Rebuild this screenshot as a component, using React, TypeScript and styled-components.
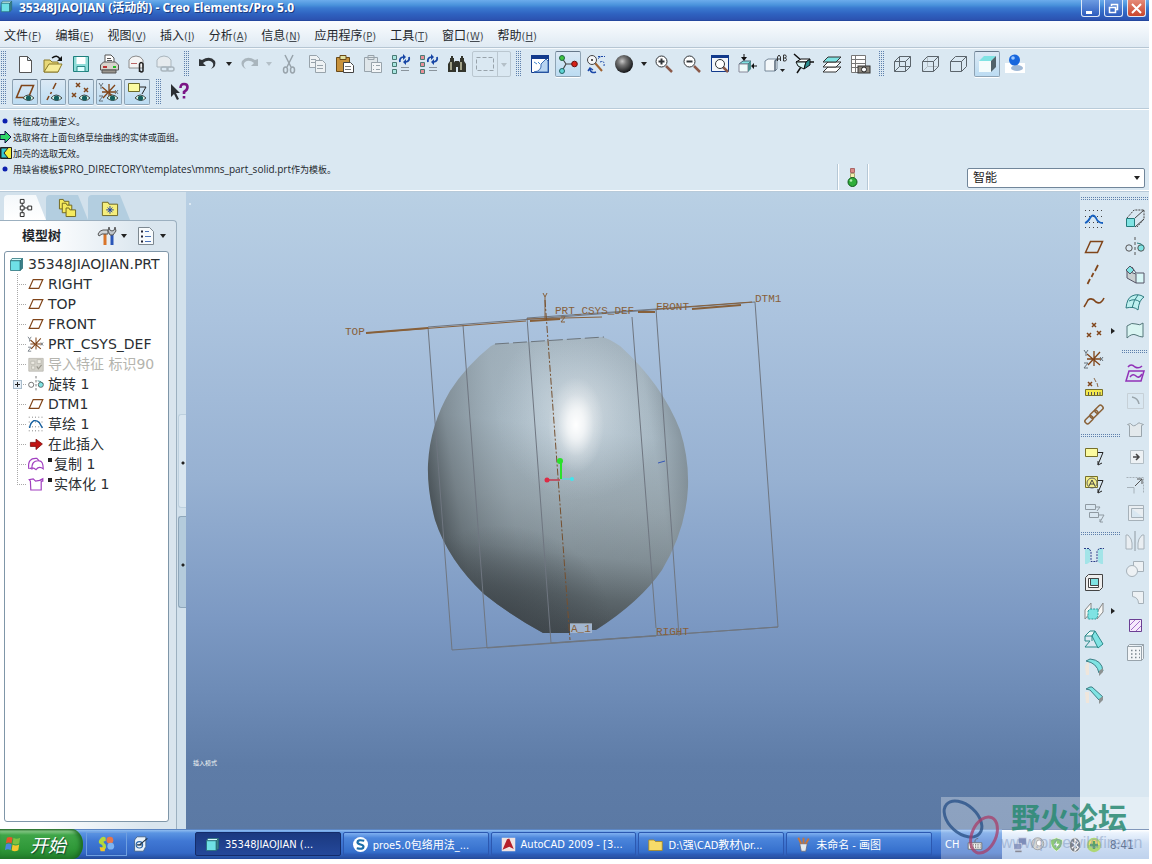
import React from "react";
import styled, { createGlobalStyle, css } from "styled-components";

const ui = `"DejaVu Sans Condensed", "DejaVu Sans", "Noto Sans CJK SC", sans-serif`;
const wide = `"DejaVu Sans", "Noto Sans CJK SC", sans-serif`;

const GlobalStyle = createGlobalStyle`
  * { box-sizing: border-box; }
  body { margin: 0; padding: 0 3px 5px 0; background: #fff; font-family: ${ui}; color: #23272c; }
  button { font: inherit; color: inherit; padding: 0; border: 0; background: none; }
  ul { list-style: none; margin: 0; padding: 0; }
`;

/* ---------- icons ---------- */

const BR = "#80451a";
const DATUM = "#87603a";
const TL = "#7fe3e3";
const GR = "#a9b5bd";
const DK = "#303438";

const cube = (back: string | null, shaded = false) => (
  <g fill="none" stroke="#5c656c">
    {shaded && (
      <g stroke="none">
        <path d="M2 7 7 2h12l-5 5z" fill={TL} />
        <path d="M2 7h12v11H2z" fill="#f4fcfc" />
        <path d="M14 7l5-5v11l-5 5z" fill="#52636a" />
      </g>
    )}
    {back && <path d="M6.500 2.500v10h11M6.500 12.500l-5 5" stroke={back} />}
    {!shaded && <path d="M1.500 7.500h11v10h-11zM1.500 7.500l5-5h11v10l-5 5M12.500 7.500l5-5" />}
  </g>
);

const cross = (x: number, y: number) => <path key={`${x}-${y}`} d={`M${x - 2} ${y - 2}l4 4m0-4l-4 4`} stroke={BR} strokeWidth="1.5" />;

const eye = (
  <g>
    <path d="M8 16q5-6 11 0-5 5-11 0z" fill="#dfe" stroke="#444" />
    <circle cx="13.500" cy="16" r="2.600" fill="#16605f" />
  </g>
);

const csys = (
  <g fill="none">
    <path d="M10 2v15M3 5l13 11M16 3 4 16M3 10h14" stroke={BR} strokeWidth="1.300" />
    <path d="M0 1l2 3 2-3M2 4v3M16 8l3 4m0-4l-3 4M0 14h4l-4 5h4" stroke="#667078" />
  </g>
);

const magnifier = (inner: React.ReactNode) => (
  <g fill="none">
    <path d="M12 12l6 6" stroke="#8b5a4a" strokeWidth="2.500" />
    <circle cx="7.500" cy="7.500" r="5.500" fill="#fff" stroke={DK} />
    {inner}
  </g>
);

const regen = (c: string) => (
  <g fill="none">
    <path d="M1.500 1.500h4v4h-4zM1.500 8.500h4v4h-4zM1.500 15.500h4v4h-4z" fill={c} stroke="#4b7a75" />
    <path d="M9 8q-1-4 3-5M18 3q1 4-3 5" stroke="#1746a5" strokeWidth="1.800" />
    <path d="M12 0v6l3-3zM15 5v6l-3-3z" fill="#1746a5" />
    <path d="M10 13.500h8M10 16.500h8" stroke="#8a949c" />
  </g>
);

const glyphs: Record<string, React.ReactNode> = {
  newFile: <path d="M4.500 2.500h8l4 4v12h-12zM12.500 2.500v4h4" fill="#fff" stroke="#555" />,
  open: (
    <g>
      <path d="M1 6h6l2 2h6v10H1z" fill="#e8d878" stroke="#8a7a2a" />
      <path d="M1 18l5-8h13l-4 8z" fill="#f6ec98" stroke="#8a7a2a" />
      <path d="M9 4q5-4 8 1" fill="none" stroke="#111" strokeWidth="1.500" />
      <path d="M19 2v5h-5z" fill="#111" />
    </g>
  ),
  save: (
    <g>
      <path d="M2.500 2.500h15v15h-15z" fill="#8fdcd8" stroke="#1f7f7c" />
      <path d="M5.500 3h9v7h-9z" fill="#fff" />
      <path d="M6 12.500h8v5H6z" fill="#dff" stroke="#2a8a88" />
    </g>
  ),
  print: (
    <g stroke="#555">
      <path d="M6 9V1h6l3 3v5" fill="#fff" />
      <path d="M8 4.500h4M8 6.500h5" />
      <path d="M1.500 11l3-3h12l3 3v5h-18z" fill="#d8d4cc" />
      <path d="M3 16h14v3H3z" fill="#9a968e" />
      <path d="M4 13h4" stroke="#b33" strokeWidth="2" />
      <path d="M14 13h3" stroke="#2b2" strokeWidth="2" />
    </g>
  ),
  mail: (
    <g fill="#f4f4f4" stroke="#8a8a8a">
      <path d="M2 14V6q2-4 7-4t7 4v8z" />
      <path d="M4 9.500h6" stroke="#b66" />
      <path d="M12.500 18V10q1.500-3 3.500 0v7q-1.500 2-3 0" fill="none" stroke="#222" strokeWidth="1.500" />
    </g>
  ),
  mailLink: (
    <g fill="#e6ebee" stroke={GR}>
      <path d="M2 13V6q2-4 7-4t7 4v7z" />
      <rect x="6" y="13" width="7" height="4" rx="2" fill="none" strokeWidth="1.500" />
      <rect x="12" y="13" width="7" height="4" rx="2" fill="none" strokeWidth="1.500" />
    </g>
  ),
  undo: <path d="M1 5v7h7l-3-3q5-4 9-1 3 3-1 7 6-3 4-8-5-6-13-1z" fill={DK} />,
  redo: <path d="M19 5v7h-7l3-3q-5-4-9-1-3 3 1 7-6-3-4-8 5-6 13-1z" fill={GR} />,
  cut: (
    <g fill="none" stroke="#98a3ab" strokeWidth="1.500">
      <path d="M6 1l6 12M14 1 8 13" />
      <ellipse cx="6.500" cy="16" rx="2" ry="3" />
      <ellipse cx="13.500" cy="16" rx="2" ry="3" />
    </g>
  ),
  copy: (
    <g fill="#eef2f4" stroke="#98a3ab">
      <path d="M2.500 1.500h7l3 3v9h-10zM4 5.500h5M4 8.500h6" />
      <path d="M8.500 6.500h7l3 3v9h-10zM10 11.500h6M10 14.500h6" />
    </g>
  ),
  paste: (
    <g stroke="#6a4a18">
      <path d="M1.500 3.500h13v14h-13z" fill="#c8923c" />
      <path d="M5 1.500h6v4H5z" fill="#e0e0a0" />
      <path d="M8.500 8.500h7l3 3v7h-10z" fill="#fff" stroke="#444" />
      <path d="M10 12.500h6M10 15.500h6" stroke="#777" />
    </g>
  ),
  pasteSpecial: (
    <g stroke="#98a3ab" fill="#dfe6ea">
      <path d="M1.500 3.500h13v14h-13zM5 1.500h6v4H5z" />
      <path d="M8.500 8.500h10v10h-10zM10 11.500h1M13 11.500h4M10 15.500h1M13 15.500h4" fill="#f2f5f7" />
    </g>
  ),
  regenA: regen("#a8e6e0"),
  regenB: regen("#e88f96"),
  find: (
    <g fill="#33352c">
      <path d="M3 4h4v3l2 3v8H1v-8l2-3zM13 4h4v3l2 3v8h-8v-8l2-3zM8 7h4v6H8z" />
      <path d="M4 8v8M14 8v8" stroke="#c9c7a8" strokeWidth="1.500" />
      <path d="M4 2h2v2H4zM14 2h2v2h-2z" />
    </g>
  ),
  repaint: (
    <g>
      <path d="M1.500 1.500h17v17h-17z" fill="#fff" stroke="#123a8c" />
      <path d="M1 1h18v4H1z" fill="#123a8c" />
      <path d="M4 18q8-1 7-8l5-5 2 2v11z" fill="#b8d4f0" stroke="#3a6cb4" />
      <path d="M4 8l3 2M8 8l2 2" stroke="#48c" />
    </g>
  ),
  spin: (
    <g>
      <path d="M4 4l4 6h8M8 10l-4 7" fill="none" stroke="#444" strokeWidth="1.200" />
      <circle cx="4" cy="4" r="2.500" fill="#3fc53f" stroke="#264" />
      <circle cx="16.500" cy="10" r="2.800" fill="#d6221a" stroke="#611" />
      <circle cx="4" cy="17" r="2.500" fill="#5fd6d6" stroke="#266" />
    </g>
  ),
  orient: (
    <g fill="none">
      <path d="M9 9l7 8" stroke="#a0622f" strokeWidth="2" />
      <circle cx="6" cy="6" r="4.500" fill="#f4f6f8" stroke="#444" />
      <circle cx="6" cy="6" r="1" fill="#222" />
      <path d="M12 2.500h7M12 4.500l3-2M14 8q5-2 4 4" stroke="#1b48a8" strokeDasharray="2 1" />
      <path d="M10 18q-5 2-6-3M2 17l2-3 3 2" stroke="#1b48a8" strokeWidth="1.500" />
    </g>
  ),
  sphere: <circle cx="10" cy="10" r="9" fill="url(#ballShade)" />,
  zoomIn: magnifier(<path d="M4.500 7.500h6M7.500 4.500v6" stroke={DK} strokeWidth="2" />),
  zoomOut: magnifier(<path d="M4.500 7.500h6" stroke={DK} strokeWidth="2" />),
  refit: (
    <g>
      <path d="M1.500 1.500h17v16h-17z" fill="#f3f6fa" stroke="#123a8c" />
      <path d="M1 1h18v3H1z" fill="#123a8c" />
      <path d="M13 13l5 5" stroke="#8b5a4a" strokeWidth="2.500" />
      <circle cx="10" cy="10" r="4.500" fill="#fff" stroke={DK} />
    </g>
  ),
  reorient: (
    <g>
      <path d="M1 10l4-3h8l-3 3z" fill={TL} stroke="#467" />
      <path d="M1 10h9v8H1z" fill="#eefafa" stroke="#889" />
      <path d="M10 10l3-3v8l-3 3z" fill="#4c8f90" />
      <path d="M6 0v5M19 12h-4" stroke="#111" />
      <path d="M3 3h6l-3 4zM16 9v6l-3-3z" fill="#111" />
    </g>
  ),
  savedViews: (
    <g fill="none">
      <path d="M-1 7l3-2h9v10l-2 2h-10z" fill="#f4f8fa" stroke="#789" />
      <path d="M9 17V7l2-2" stroke="#567" strokeWidth="1.500" />
      <path d="M11.500 7V3l1.500-2 1.500 2v4M11.500 5h3M17.500 1v6h2q2-1.500 0-3 1.500-1.500 0-3zM17.500 4h2" stroke="#333" />
      <path d="M14 15h5l-2.500 3z" fill="#222" />
    </g>
  ),
  viewMgr: (
    <g>
      <path d="M0 0l8 7M14 8h6M7 13l-4 6" stroke="#111" strokeWidth="1.500" />
      <path d="M2 8l5-3h9l-4 3z" fill="#fff" stroke="#111" />
      <path d="M2 8h10l-2 7-6-3z" fill="#d8f6f6" stroke="#111" />
      <path d="M12 8l4-3v6l-6 4z" fill="#2b8f90" stroke="#111" />
    </g>
  ),
  layers: (
    <g stroke="#333">
      <path d="M1 18l5-5h13l-5 5z" fill="#fff" />
      <path d="M1 13l5-5h13l-5 5z" fill="#fff" />
      <path d="M1 8l5-5h13l-5 5z" fill={TL} />
    </g>
  ),
  report: (
    <g>
      <path d="M1.500 1.500h14v17h-14zM1.500 5.500h14M1.500 9.500h14M1.500 13.500h14M5.500 1.500v17" fill="#fff" stroke="#777" />
      <rect x="8" y="12" width="12" height="7" fill="#8a857c" stroke="#333" />
      <circle cx="14" cy="15.500" r="2.500" fill="#fff" stroke="#222" />
    </g>
  ),
  wireframe: cube("#5c656c"),
  hidden: cube("#b3bdc4"),
  noHidden: cube(null),
  shaded: cube(null, true),
  enhanced: (
    <g>
      <path d="M0 9h20v10H0z" fill="#fff" />
      <ellipse cx="12" cy="14" rx="6" ry="3" fill="#9fb8d6" />
      <circle cx="9.500" cy="6" r="5.500" fill="#1766dd" />
      <circle cx="8" cy="4" r="1.800" fill="#9cc8ff" />
    </g>
  ),
  planeEye: (
    <g>
      <path d="M1.500 15.500l5-12h12l-5 12z" fill="none" stroke={BR} strokeWidth="1.600" />
      {eye}
    </g>
  ),
  axisEye: (
    <g>
      <path d="M13 1l-3 6M8.500 10l-1 2M6 14l-2 4" stroke={BR} strokeWidth="1.600" />
      {eye}
    </g>
  ),
  pointEye: (
    <g>
      {cross(7, 3)}
      {cross(15, 8)}
      {cross(3, 13)}
      {eye}
    </g>
  ),
  csysEye: (
    <g>
      {csys}
      {eye}
    </g>
  ),
  noteEye: (
    <g>
      <path d="M1.500 1.500h11v8h-11z" fill="#fbfba0" stroke="#6b6b2c" />
      <path d="M13 5h6l-4 7" fill="none" stroke="#222" />
      {eye}
    </g>
  ),
  help: (
    <g>
      <path d="M1 2v13l3-3 3 6 2-1-3-6h4z" fill="#2b2f33" />
      <path d="M10.500 6q0-4 3.500-4t3.500 3-3.500 5v2M14 14v2.500" fill="none" stroke="#7a1585" strokeWidth="2.600" />
    </g>
  ),
  sketch: (
    <g fill="none">
      <path d="M1 1.500h18M1 7.500h18M1 13.500h18M1 18.500h18" stroke="#444" strokeDasharray="1 3" />
      <path d="M1 14q3-1 5-5 3-5 6 0 2 5 7 5" stroke="#1560c0" strokeWidth="1.800" />
    </g>
  ),
  sketchFeat: (
    <g fill="none">
      <path d="M1 1.500h18M1 7.500h18M1 13.500h18M1 18.500h18" stroke="#444" strokeDasharray="1 3" />
      <path d="M2 15q1-7 5-9 4-1 7 2l4 7" stroke="#1560a0" strokeWidth="1.800" />
    </g>
  ),
  plane: <path d="M1.500 15.500l5-11h12l-5 11z" fill="none" stroke={BR} strokeWidth="1.500" />,
  axis: <path d="M14 0l-3 6M9.500 8l-2 4M6 14l-2.500 5" stroke={BR} strokeWidth="1.700" />,
  curve: <path d="M0 14q2-3 4-7 4-3 8 2 5 3 8-4" fill="none" stroke={BR} strokeWidth="1.600" />,
  points: (
    <g>
      {cross(10, 4)}
      {cross(5, 14)}
      {cross(15, 12)}
    </g>
  ),
  csys,
  analysis: (
    <g>
      {cross(6, 7)}
      <path d="M10 1l2 4M13 6l1 4" stroke="#8a6a4a" />
      <path d="M1.500 12.500h17v6h-17z" fill="#f2e84e" stroke="#77702a" />
      <path d="M4.500 18v-3M7.500 18v-3M10.500 18v-3M13.500 18v-3M16 18v-3" stroke="#555" />
    </g>
  ),
  chain: (
    <g fill="none" stroke="#8a6238" strokeWidth="1.500">
      <rect x="0" y="12" width="9" height="5" rx="2" transform="rotate(-45 5 14)" />
      <rect x="6" y="7" width="9" height="5" rx="2" transform="rotate(-45 10 10)" />
      <rect x="11" y="2" width="9" height="5" rx="2" transform="rotate(-45 15 5)" />
    </g>
  ),
  note: (
    <g fill="none" stroke="#222">
      <path d="M1.500 1.500h12v8h-12z" fill="#fbfba0" stroke="#77702a" />
      <path d="M14 5.500h5l-5 12M14 14v4l4-2" />
    </g>
  ),
  noteA: (
    <g fill="none" stroke="#222">
      <path d="M1.500 1.500h12v11h-12z" fill="#f3ee8a" stroke="#77702a" />
      <circle cx="8" cy="8" r="5" stroke="#666" />
      <path d="M5 11l3-6 3 6M6 9h4" stroke="#444" />
      <path d="M14 5.500h5l-5 12M14 14v4l4-2" />
    </g>
  ),
  noteOff: (
    <g fill="none" stroke="#8f9aa2">
      <path d="M1.500 1.500h10v5h-10zM5.500 9.500h9v5h-9zM12 4h4l-3 4M15 12h5l-4 7M16 16v3h3" />
    </g>
  ),
  hole: (
    <g>
      <path d="M1 4h5v13l-3 2H1zM19 4h-5v13l3 2h2z" fill={TL} opacity=".6" />
      <path d="M0 3.500h5l2 3v10h6v-10l2-3h5" fill="none" stroke="#2a3c88" strokeDasharray="2 1" />
    </g>
  ),
  shell: (
    <g stroke="#444">
      <path d="M1.500 4.500l3-3h14v13l-3 3h-14z" fill="#eee" />
      <path d="M4.500 5.500h10v9h-10z" fill="#fff" />
      <path d="M6.500 5.500h8v7h-8z" fill={TL} />
    </g>
  ),
  rib: (
    <g stroke="#888" fill="#f6f6f4">
      <path d="M1 9l6-7v9l-6 7zM13 11l6-9v9l-6 7z" />
      <path d="M4 10l2-2h8v7l-2 3H4z" fill={TL} stroke="#2b9a9a" strokeDasharray="2 1" />
    </g>
  ),
  draft: (
    <g stroke="#2b8a8a">
      <path d="M1 7l5-5h5l-3 5z" fill="#eef8f8" />
      <path d="M11 2l8 13-5 4-6-12z" fill={TL} />
      <path d="M1 7v5h5l-5 6h13M8 7v5" fill="none" />
    </g>
  ),
  round: (
    <g>
      <path d="M1 9l4-6v15H2z" fill="#efe6dc" />
      <path d="M2 4l4-2q12 1 13 12l-4 2Q13 6 2 4z" fill={TL} stroke="#3b7f86" />
      <path d="M15 14v5l4-4v-4z" fill="#8d9292" />
    </g>
  ),
  chamfer: (
    <g>
      <path d="M1 7h4v11H2z" fill="#efe6dc" />
      <path d="M2 4l4-2h2l11 10-4 3L6 5z" fill={TL} stroke="#3b7f86" />
      <path d="M15 14v5l4-4v-4z" fill="#8d9292" />
    </g>
  ),
  extrude: (
    <g fill="none" stroke="#444">
      <path d="M2 9l7-8h10v9l-7 8" strokeDasharray="2 1" />
      <path d="M10 9l9-8M10 18l9-8" />
      <path d="M1.500 9.500h8v8h-8z" fill={TL} stroke="#247b7b" />
    </g>
  ),
  revolve: (
    <g fill="none" stroke="#555">
      <path d="M10 0v20" strokeDasharray="3 2" />
      <circle cx="4" cy="11" r="3.200" />
      <circle cx="16" cy="11" r="3.200" fill={TL} />
      <path d="M12 6q5 0 7 4" stroke="#2b7f7f" />
    </g>
  ),
  sweep: (
    <g stroke="#556">
      <path d="M2 6l5-4 4 6h8v10h-8z" fill="#d9f7f7" />
      <path d="M2 6v7l9 5V9z" fill="#c9cfd0" />
      <path d="M1 5l4-4 4 4-4 4z" fill={TL} />
    </g>
  ),
  boundary: (
    <g stroke="#2f7b80" fill="#bdf0f0">
      <path d="M1 15q1-10 6-12 6-3 12 1-5 3-6 13-4-4-12-2z" />
      <path d="M4 8q6-3 11 1M13 2q-4 4-6 13" fill="none" />
    </g>
  ),
  style: <path d="M2 5q5-4 9-2t7-1v14q-3 0-7-2t-9 3z" fill="#d9f5f2" stroke="#54767a" />,
  fill: (
    <g fill="none" stroke="#9132b8" strokeWidth="1.500">
      <path d="M3 4q3-4 7 0 4 2 7-1M4 8h15l-3 10H1z" />
      <path d="M5 14q3-4 6-1t6-2" />
    </g>
  ),
  mergeOff: (
    <g fill="none" stroke="#c6d0d7">
      <path d="M2.500 2.500h16v15h-16z" />
      <path d="M7 6q6 1 7 7" stroke="#99a4ab" strokeWidth="1.500" />
    </g>
  ),
  trimOff: <path d="M2.500 5.500l3-1q3 4 6 1t4-1l3 1-2 1v11h-12v-11z" fill="#e3e9ec" stroke="#9aa5ac" />,
  offsetOff: (
    <g fill="#edf1f4" stroke="#b3bec5">
      <path d="M5.500 3.500h13v13h-13z" />
      <path d="M8 10h6M11 7l3 3-3 3" stroke="#444" fill="none" strokeWidth="1.500" />
    </g>
  ),
  extendOff: (
    <g fill="none" stroke="#a6b1b9">
      <path d="M1.500 2.500h17v15" strokeDasharray="2 1" />
      <path d="M2 12.500h7v6" />
      <path d="M10 11l7-7M12 4h5v5" stroke="#555" />
    </g>
  ),
  thickenOff: <path d="M3.500 2.500h15v15h-15zM6.500 5.500h12M6.500 5.500v9h12" fill="#e9eef2" stroke="#a6b1b9" />,
  mirrorOff: (
    <g fill="#e9eef2" stroke="#a6b1b9">
      <path d="M10 0v20" stroke="#8f9aa2" />
      <path d="M1 4h2q4 4 4 8v6H1zM19 4h-2q-4 4-4 8v6h6z" />
    </g>
  ),
  solidOff: (
    <g fill="#edf1f4" stroke="#a6b1b9">
      <path d="M8.500 2.500h10v10h-10z" />
      <circle cx="7" cy="12" r="5.500" />
    </g>
  ),
  cutOff: <path d="M7.500 4.500h11v12h-5q0-6-6-7z" fill="#edf1f4" stroke="#a6b1b9" />,
  hatch: (
    <g stroke="#a06cc8">
      <path d="M4.500 4.500h12v12h-12z" fill="#f6eafb" stroke="#6b3f93" />
      <path d="M5 10l5-5M6 15l9-9M11 16l5-5" />
    </g>
  ),
  pattern: (
    <g>
      <path d="M2.500 3.500h14v14h-14zM16.500 3.500l2-2v14l-2 2M2.500 3.500l2-2h14" fill="#f3f6f8" stroke="#98a3ab" />
      <path d="M6 7.500h9M6 11h9M6 14.500h9" stroke="#7b868e" strokeWidth="1.500" strokeDasharray="1.500 2.500" />
    </g>
  ),
  treePart: (
    <g stroke="#236b74">
      <path d="M2 5l2-3h14l-3 3z" fill="#d8fbfb" />
      <path d="M2 5h13v13H2z" fill="#6fe0e6" />
      <path d="M15 5l3-3v13l-3 3z" fill="#3c8088" />
    </g>
  ),
  imported: (
    <g fill="#d4d2ca" stroke="#b9b7ae">
      <path d="M1 3h18v16H1z" />
      <path d="M3.500 6.500h5v4h-5zM11.500 4.500h5v5h-5zM4.500 12.500h4v4h-4z" fill="#eceae2" />
      <path d="M11 13l2 3 4-5" fill="none" stroke="#9a988e" strokeWidth="1.500" />
    </g>
  ),
  insertHere: <path d="M3 8h7V4l8 6-8 7v-4H3z" fill="#c11414" stroke="#7c0b0b" />,
  copyFeat: <path d="M1 16q-2-14 10-13l3 3q5 0 5 10-5-4-9 1-4-4-8-1M5 17q-1-12 9-11" fill="none" stroke="#a13fc0" strokeWidth="1.500" />,
  solidFeat: <path d="M3 6.500L1.500 4.500l5-1 3 3 5-1 4-2v3h-2v11H3.500z" fill="none" stroke="#a13fc0" strokeWidth="1.500" />,
  tabTree: <path d="M4.500 1.500h4v4h-4zM4.500 8.500h4v4h-4zM4.500 15.500h4v4h-4zM12.500 8.500h4v4h-4zM6.500 5.500v3M6.500 12.500v3M8.500 10.500h4" fill="#fff" stroke="#222" />,
  tabFolders: (
    <g fill="#f5ea5e" stroke="#6f6620">
      <path d="M1.500 1.500h4l1 2h5v8h-10z" />
      <path d="M4.500 5.500h4l1 2h5v8h-10z" />
      <path d="M8.500 10.500h3l1 2h6v7h-10z" />
    </g>
  ),
  tabFav: (
    <g>
      <path d="M2.500 4.500h6l1 2h9v12h-16z" fill="#f5ee7c" stroke="#6f6620" />
      <path d="M10.500 8.500v8M6.500 12.500h8M8 10l5 5M13 10l-5 5" stroke="#1c3fa8" />
    </g>
  ),
  tools: (
    <g>
      <path d="M8 8v11" stroke="#d9752a" strokeWidth="3" />
      <path d="M1 8q2-4 5-4h5v4H5l-3 2z" fill="#cfd4d8" stroke="#555" />
      <path d="M15 7v12" stroke="#2a56b8" strokeWidth="3" />
      <path d="M12 1q0 4 3 4t3-4l1 4-3 4h-3l-2-4z" fill="#bfc5ca" stroke="#555" />
    </g>
  ),
  listView: (
    <g>
      <path d="M2.500 1.500h11l4 4v13h-15z" fill="#f7fafc" stroke="#7d8890" />
      <path d="M5 5.500h2M5 10.500h2M5 15.500h2" stroke="#223" strokeWidth="2" />
      <path d="M9 5.500h4M9 10.500h6M9 15.500h6" stroke="#4a72b8" />
    </g>
  ),
};

const Svg = styled.svg<{ $s?: number }>`
  display: block;
  flex: none;
  width: ${(p) => p.$s ?? 20}px;
  height: ${(p) => p.$s ?? 20}px;
  overflow: visible;
`;

const Icon = ({ name, size }: { name: string; size?: number }) => (
  <Svg $s={size} viewBox="0 0 20 20" aria-hidden="true">
    {glyphs[name]}
  </Svg>
);

/* ---------- window chrome ---------- */

const Frame = styled.div`
  position: relative;
  display: flex;
  flex-direction: column;
  min-height: calc(100vh - 5px);
  background: #dae8f2;
`;

const TitleBar = styled.header`
  display: flex;
  align-items: flex-start;
  height: 21px;
  padding-right: 3px;
  background: linear-gradient(#6cacec 0, #4a93dc 5px, #3a7ad0 8px, #2f62c0 14px, #2c52b0 20px, #1c3c8c 21px);
`;

const Title = styled.h1`
  flex: 1;
  margin: 0;
  padding-left: 6px;
  font-family: "Open Sans", "Noto Sans CJK SC", sans-serif;
  font-size: 12px;
  line-height: 16px;
  font-weight: bold;
  color: #fff;
  text-shadow: 1px 1px 0 #1d3c80;
  white-space: nowrap;
`;

const WinButton = styled.button<{ $close?: boolean }>`
  display: grid;
  place-items: center;
  width: 19px;
  height: 17px;
  margin-left: 4px;
  border: 1px solid #dfe9f8;
  border-top: 0;
  border-radius: 0 0 3px 3px;
  background: ${(p) => (p.$close ? "linear-gradient(#e58a78, #c8452c)" : "linear-gradient(#6d9ce2, #2c5bbd)")};
`;

const MenuBar = styled.nav`
  display: flex;
  align-items: center;
  gap: 14px;
  height: 27px;
  padding: 4px 0 0 4px;
  border-bottom: 1px solid #b6c6d3;
  background: linear-gradient(#fafcfe, #dfeaf3);
`;

const MenuItem = styled.button`
  font-size: 12px;
  line-height: 20px;
  white-space: nowrap;
  span { font-size: 11px; color: #444b52; }
`;

const Toolbars = styled.div`
  display: flex;
  flex-direction: column;
  padding: 1px 0 2px;
  border-top: 1px solid #f5f9fc;
  border-bottom: 1px solid #fff;
  box-shadow: inset 0 -1px #b9cbd9;
  height: 62px;
`;

const ToolRow = styled.div`
  display: flex;
  align-items: center;
  height: 28px;
`;

const dots = css`
  background-image: conic-gradient(from 0deg at 1px 1px, transparent 75%, #5e80ac 0);
  background-size: 2px 2px;
`;

const Grip = styled.span<{ $first?: boolean }>`
  flex: none;
  width: 5px;
  height: 26px;
  margin: ${(p) => (p.$first ? "0 5px 0 1px" : "0 5px")};
  ${dots}
`;

const ToolButton = styled.button<{ $active?: boolean }>`
  display: grid;
  place-items: center;
  flex: none;
  width: 26px;
  height: 26px;
  margin: 1px;
  border-radius: 2px;
  ${(p) => p.$active && css`
    border: 1px solid #8ea3b4;
    border-top-color: #66788a;
    background: linear-gradient(#dbe9f5, #bcdcf2);
    box-shadow: 0 1px #fff;
  `}
`;

const DropArrow = styled.button<{ $off?: boolean; $wide?: boolean }>`
  flex: none;
  display: grid;
  place-items: center;
  width: ${(p) => (p.$wide ? 13 : 12)}px;
  height: 26px;
  &::before {
    content: "";
    border: 3px solid transparent;
    border-top: 4px solid ${(p) => (p.$off ? "#b4c0c8" : "#222")};
    border-bottom: 0;
  }
`;

const SelectTool = styled.span`
  display: flex;
  flex: none;
  width: 39px;
  height: 26px;
  margin-left: 1px;
  border: 1px solid #bac7d0;
  border-radius: 2px;
`;

const SelectMain = styled.button`
  display: grid;
  place-items: center;
  width: 26px;
  border-right: 1px solid #bac7d0;
`;

const Messages = styled.section`
  display: flex;
  align-items: flex-end;
  height: 81px;
  border-bottom: 1px solid #fff;
`;

const Log = styled.ul`
  flex: 1;
  align-self: flex-start;
  min-width: 0;
`;

const LogLine = styled.li`
  display: flex;
  align-items: center;
  height: 16px;
  font-size: 9px;
  white-space: nowrap;
  &:first-child { margin-top: 3px; }
`;

const LogPath = styled.span`
  font-family: "Open Sans", sans-serif;
  font-size: 10px;
`;

const LogIcon = styled.svg`
  width: 13px;
  height: 14px;
  flex: none;
`;

const Signal = styled.div`
  display: grid;
  place-items: center;
  width: 31px;
  height: 26px;
  margin-right: 99px;
  border: solid #b6c8d6;
  border-width: 0 1px;
  box-shadow: 1px 0 #fff, inset 1px 0 #fff;
`;

const Filter = styled.label`
  position: relative;
  display: block;
  width: 178px;
  margin: 0 4px 2px 0;
  &::after {
    content: "";
    position: absolute;
    right: 5px;
    top: 8px;
    border: 3px solid transparent;
    border-top: 4px solid #222;
    border-bottom: 0;
    pointer-events: none;
  }
`;

const FilterSelect = styled.select`
  appearance: none;
  display: block;
  width: 100%;
  height: 20px;
  padding: 0 5px;
  border: 1px solid #71869a;
  border-radius: 2px;
  background: #fff;
  font-family: ${ui};
  font-size: 12px;
  line-height: 18px;
  color: #222;
`;

/* ---------- body ---------- */

const Main = styled.main`
  display: flex;
  flex: 1;
  border-top: 1px solid #b8cad9;
`;

const Navigator = styled.aside`
  display: flex;
  flex: none;
  width: 186px;
  background: #d2e1ec;
`;

const NavColumn = styled.div`
  display: flex;
  flex-direction: column;
  width: 177px;
  padding-top: 3px;
`;

const Tabs = styled.div`
  display: flex;
  padding-left: 4px;
`;

const Tab = styled.button<{ $on?: boolean }>`
  display: grid;
  place-items: center;
  width: 42px;
  height: 25px;
  border-radius: 4px 0 0 0;
  clip-path: polygon(0 0, 32px 0, 42px 100%, 0 100%);
  background: ${(p) => (p.$on ? "linear-gradient(#f4f8fb, #fff)" : "#b3cee0")};
`;

const Panel = styled.div`
  display: flex;
  flex-direction: column;
  flex: 1;
  padding: 0 7px 7px 4px;
  border: solid #9cb0c0;
  border-width: 1px 1px 0 0;
  border-radius: 0 4px 0 0;
  background: linear-gradient(90deg, #fff 40px, #d9e5ee 150px);
`;

const PanelHead = styled.div`
  display: flex;
  align-items: center;
  height: 30px;
  padding-left: 18px;
`;

const PanelTitle = styled.h2`
  flex: 1;
  margin: 0;
  font-size: 13px;
  line-height: 20px;
`;

const HeadTool = styled.div`
  display: flex;
  align-items: center;
  margin-left: 6px;
`;

const Tree = styled.ul`
  flex: 1;
  && { padding: 2px 0 0 4px; }
  border: 1px solid #7f96a8;
  border-radius: 3px;
  background: #fff;
  font-family: ${wide};
  font-size: 14px;
  line-height: 20px;
`;

const TreeRow = styled.li<{ $root?: boolean; $dim?: boolean; $last?: boolean }>`
  position: relative;
  display: flex;
  align-items: center;
  height: 20px;
  gap: 4px;
  padding-left: ${(p) => (p.$root ? 0 : 19)}px;
  white-space: nowrap;
  color: ${(p) => (p.$dim ? "#b4b4ae" : "#2b2f33")};
  ${(p) => !p.$root && css`
    background:
      repeating-linear-gradient(#a8a8a8 0 1px, transparent 1px 2px) 8px 0 / 1px ${p.$last ? "10px" : "20px"} no-repeat,
      repeating-linear-gradient(90deg, #a8a8a8 0 1px, transparent 1px 2px) 8px 10px / 10px 1px no-repeat;
  `}
`;

const Expander = styled.button`
  position: absolute;
  left: 4px;
  top: 6px;
  width: 9px;
  height: 9px;
  border: 1px solid #a9bccb;
  background:
    linear-gradient(#222, #222) center / 5px 1px no-repeat,
    linear-gradient(#222, #222) center / 1px 5px no-repeat,
    #e6eef6;
`;

const FlaggedText = styled.span<{ $flag?: boolean }>`
  ${(p) => p.$flag && css`
    padding-left: 6px;
    background: linear-gradient(#222, #222) 0 4px / 4px 4px no-repeat;
  `}
`;

const Sashes = styled.div`
  display: flex;
  flex-direction: column;
  gap: 8px;
  width: 8px;
  padding-top: 222px;
  margin-left: 1px;
`;

const Sash = styled.button<{ $dark?: boolean }>`
  height: ${(p) => (p.$dark ? 92 : 94)}px;
  border: 1px solid ${(p) => (p.$dark ? "#8fa7ba" : "#bdd0de")};
  border-right: 0;
  border-radius: 3px 0 0 3px;
  background: radial-gradient(circle at 4px 48px, #222 1px, transparent 2px), ${(p) => (p.$dark ? "#b4cbdc" : "#d9e6f0")};
`;

const Viewport = styled.section`
  flex: 1;
  min-width: 0;
  background: linear-gradient(#b9d0e4 0, #abc3de 20%, #97b1d2 45%, #7c99c3 67%, #6e8cb7 78%, #5e7ca7 90%, #5b79a4 100%);
`;

const Scene = styled.svg`
  display: block;
  width: 100%;
  font-family: "Liberation Mono", monospace;
  font-size: 11px;
`;

const ModeText = styled.text`
  font-family: ${ui};
  font-size: 6px;
  fill: #f4f7f4;
`;

const SideTools = styled.aside`
  flex: none;
  width: 69px;
  padding-top: 5px;
  background: #d9e7f1;
`;

const SideTop = styled.div`
  height: 4px;
  margin: 0 1px 4px 1px;
  ${dots}
`;

const SideCols = styled.div`
  display: flex;
`;

const SideCol = styled.div<{ $w: number }>`
  display: flex;
  flex-direction: column;
  width: ${(p) => p.$w}px;
`;

const SideLine = styled.div`
  display: flex;
  align-items: center;
`;

const SideGrip = styled.span`
  height: 4px;
  margin: 5px 1px;
  ${dots}
`;

const FlyOut = styled.button`
  width: 10px;
  height: 26px;
  display: grid;
  place-items: center;
  &::before {
    content: "";
    border: 3px solid transparent;
    border-left: 4px solid #222;
    border-right: 0;
  }
`;

/* ---------- task bar ---------- */

const TaskBar = styled.footer`
  display: flex;
  height: 30px;
  color: #fff;
  background: linear-gradient(#284f96 0, #8fbcf0 1px, #5a94e2 4px, #4078d4 12px, #3468c6 24px, #234a9a 30px);
`;

const Start = styled.button`
  display: flex;
  align-items: center;
  gap: 7px;
  width: 83px;
  padding-left: 4px;
  border-radius: 0 12px 10px 0 / 0 15px 15px 0;
  background: linear-gradient(#2b6b2b 0, #8fd08f 2px, #3fa548 6px, #2f9838 20px, #23802b 29px);
  box-shadow: inset -3px 0 4px #1d6a24;
  font-size: 18px;
  font-style: italic;
  text-shadow: 1px 1px 1px #143;
`;

const Quick = styled.div`
  display: flex;
  align-items: center;
  flex: none;
  width: 109px;
  padding-left: 3px;
`;

const QuickButton = styled.button<{ $framed?: boolean }>`
  display: grid;
  place-items: center;
  width: ${(p) => (p.$framed ? 41 : 28)}px;
  height: 24px;
  border: ${(p) => (p.$framed ? "1px solid #6f9fe0" : "0")};
`;

const Tasks = styled.div`
  display: flex;
  align-items: center;
  flex: 1;
  gap: 2px;
  padding: 3px 9px 3px 3px;
`;

const Task = styled.button<{ $on?: boolean }>`
  display: flex;
  align-items: center;
  gap: 5px;
  flex: 1 1 0;
  min-width: 0;
  height: 24px;
  padding-left: 9px;
  border: 1px solid ${(p) => (p.$on ? "#142c6a" : "#2c58b0")};
  border-radius: 2px;
  background: ${(p) => (p.$on ? "linear-gradient(#1b3980, #24489a)" : "linear-gradient(#7fb0f0, #4c86dc 5px, #356fcc 19px, #2a58b2)")};
  font-size: 11px;
  white-space: nowrap;
  overflow: hidden;
`;

const Lang = styled.div`
  display: flex;
  align-items: center;
  gap: 8px;
  flex: none;
  width: 61px;
  padding-left: 4px;
  font-size: 11px;
`;

const Tray = styled.div`
  display: flex;
  align-items: center;
  flex: none;
  gap: 3px;
  width: 147px;
  padding-left: 10px;
  border-top: 1px solid #4b6a9c;
  background: linear-gradient(#fff 0, #e2eefc 3px, #b9d0ef 14px, #a5c0e6 28px);
  color: #223a66;
  font-size: 12px;
  time { margin-left: auto; padding-right: 15px; }
`;

const Watermark = styled.div`
  position: absolute;
  right: 0;
  bottom: 0;
  display: flex;
  width: 208px;
  height: 62px;
  background: rgba(255, 255, 255, 0.3);
  pointer-events: none;
`;

const MarkRings = styled.svg`
  flex: none;
  width: 60px;
  height: 62px;
`;

const MarkText = styled.div`
  flex: 1;
  white-space: nowrap;
  padding: 5px 0 0 10px;
`;

const MarkName = styled.div`
  font: bold 29px/29px "Noto Sans CJK SC", sans-serif;
  color: #2a8a72;
  opacity: 0.85;
`;

const MarkUrl = styled.div`
  margin-left: -10px;
  font: 16px/24px "Liberation Sans", sans-serif;
  color: #7890b8;
  opacity: 0.45;
`;

/* ---------- data ---------- */

const menus = [["文件", "F"], ["编辑", "E"], ["视图", "V"], ["插入", "I"], ["分析", "A"], ["信息", "N"], ["应用程序", "P"], ["工具", "T"], ["窗口", "W"], ["帮助", "H"]];

const tree: { icon: string; text: string; root?: boolean; dim?: boolean; plus?: boolean; flag?: boolean }[] = [
  { icon: "treePart", text: "35348JIAOJIAN.PRT", root: true },
  { icon: "plane", text: "RIGHT" },
  { icon: "plane", text: "TOP" },
  { icon: "plane", text: "FRONT" },
  { icon: "csys", text: "PRT_CSYS_DEF" },
  { icon: "imported", text: "导入特征 标识90", dim: true },
  { icon: "revolve", text: "旋转 1", plus: true },
  { icon: "plane", text: "DTM1" },
  { icon: "sketchFeat", text: "草绘 1" },
  { icon: "insertHere", text: "在此插入" },
  { icon: "copyFeat", text: "复制 1", flag: true },
  { icon: "solidFeat", text: "实体化 1", flag: true },
];

const sideLeft = [
  ["sketch", "plane", "axis", "curve", "points>", "csys", "analysis", "chain"],
  ["note", "noteA", "noteOff"],
  ["hole", "shell", "rib>", "draft", "round", "chamfer"],
];
const sideRight = [
  ["extrude", "revolve", "sweep", "boundary", "style"],
  ["fill", "mergeOff", "trimOff", "offsetOff", "extendOff", "thickenOff", "mirrorOff", "solidOff", "cutOff", "hatch", "pattern"],
];

const Tools = ({ names, active = [] }: { names: string[]; active?: string[] }) => (
  <>
    {names.map((n) => (
      <ToolButton key={n} type="button" aria-label={n} $active={active.includes(n)}>
        <Icon name={n} />
      </ToolButton>
    ))}
  </>
);

const SideGroup = ({ groups, width }: { groups: string[][]; width: number }) => (
  <SideCol $w={width}>
    {groups.map((g, i) => (
      <React.Fragment key={i}>
        {i > 0 && <SideGrip />}
        {g.map((n) => {
          const name = n.replace(">", "");
          return (
            <SideLine key={n}>
              <ToolButton type="button" aria-label={name}><Icon name={name} /></ToolButton>
              {n !== name && <FlyOut type="button" aria-label={`${name} 更多`} />}
            </SideLine>
          );
        })}
      </React.Fragment>
    ))}
  </SideCol>
);

const body =
  "M495 344L602 337Q608 338 620 346Q662 384 680 430Q689 458 688 487Q686 530 662 570Q640 602 596 630L592 630V624H570V633H543Q510 615 484 594Q448 560 435 520Q427 490 428 464Q430 425 450 391Q466 366 491 346Z";

const Model = () => (
  <Scene viewBox="186 192 894 637" role="img" aria-label="35348JIAOJIAN">
    <defs>
      <radialGradient id="ballShade" cx=".4" cy=".35" r=".65">
        <stop offset="0" stopColor="#c8c8c8" /><stop offset=".35" stopColor="#777" /><stop offset="1" stopColor="#141618" />
      </radialGradient>
      <linearGradient id="base" x1=".5" y1="0" x2=".4" y2="1">
        <stop offset="0" stopColor="#a3b3be" /><stop offset=".3" stopColor="#abbcc7" /><stop offset=".55" stopColor="#98a6ae" />
        <stop offset=".72" stopColor="#828f96" /><stop offset=".86" stopColor="#5c666b" /><stop offset="1" stopColor="#41484d" />
      </linearGradient>
      <linearGradient id="sides" x1="0" y1=".6" x2="1" y2=".42">
        <stop offset="0" stopColor="#2f363b" stopOpacity=".8" /><stop offset=".12" stopColor="#3f474c" stopOpacity=".4" />
        <stop offset=".32" stopColor="#59646c" stopOpacity=".1" /><stop offset=".5" stopColor="#59646c" stopOpacity="0" />
        <stop offset=".88" stopColor="#59646c" stopOpacity=".06" /><stop offset="1" stopColor="#4b565e" stopOpacity=".4" />
      </linearGradient>
      <radialGradient id="lowShade">
        <stop offset="0" stopColor="#3a4146" stopOpacity=".7" /><stop offset="1" stopColor="#3a4146" stopOpacity="0" />
      </radialGradient>
      <radialGradient id="glow">
        <stop offset="0" stopColor="#fff" stopOpacity=".5" /><stop offset=".5" stopColor="#dfeaf2" stopOpacity=".28" /><stop offset="1" stopColor="#cfdce6" stopOpacity="0" />
      </radialGradient>
      <radialGradient id="spot">
        <stop offset="0" stopColor="#fff" /><stop offset=".3" stopColor="#fff" stopOpacity=".75" /><stop offset=".65" stopColor="#fff" stopOpacity=".25" /><stop offset="1" stopColor="#fff" stopOpacity="0" />
      </radialGradient>
      <clipPath id="bodyClip"><path d={body} /></clipPath>
    </defs>
    <path d={body} fill="url(#base)" />
    <path d={body} fill="url(#sides)" />
    <g clipPath="url(#bodyClip)">
      <ellipse cx="500" cy="620" rx="110" ry="95" fill="url(#lowShade)" />
      <ellipse cx="580" cy="410" rx="85" ry="90" fill="url(#glow)" />
      <ellipse cx="576" cy="425" rx="28" ry="48" fill="url(#spot)" />
    </g>
    <path d="M495 344L604 337" stroke="#6c757d" strokeDasharray="14 4" />
    <g fill="none" stroke="#6f7680">
      <path d="M428 327L452 650L778 627L755 302Z" />
      <path d="M463 325L487 648M527 318L551 643L778 627M527 318L656 309L679 636M632 317L656 628M487 648L656 636" />
    </g>
    <g stroke={DATUM} fill="none">
      <path d="M366 333L526 321M656 309L752 302" />
      <path d="M366 333L428 328" strokeWidth="2" />
      <path d="M530 321L560 319M692 309L741 305M638 312L655 312" strokeWidth="2" />
      <path d="M527 319L602 317" />
      <path d="M543 293l2 4 2-4M545 297v22M561 317h4l-4 5h4" />
      <path d="M545 300L570 640" strokeDasharray="7 2 2 2" stroke="#76502f" />
    </g>
    <path d="M570 623h22v10h-22z" fill="#c3d0dd" opacity=".55" />
    <path d="M561 479V462" stroke="#2be02b" strokeWidth="2" />
    <circle cx="560" cy="461" r="3" fill="#2be02b" />
    <path d="M546 480h14" stroke="#c2384c" strokeWidth="1.500" />
    <circle cx="547" cy="480" r="2.500" fill="#dd2b45" />
    <path d="M562 479h10" stroke="#4fe0e6" />
    <circle cx="572" cy="479" r="2" fill="#3fe6ee" />
    <path d="M658 463l7-2" stroke="#3557b8" />
    <g fill={DATUM}>
      <text x="345" y="335">TOP</text>
      <text x="555" y="314">PRT_CSYS_DEF</text>
      <text x="656" y="310">FRONT</text>
      <text x="755" y="302">DTM1</text>
      <text x="656" y="635">RIGHT</text>
      <text x="571" y="632">A_1</text>
    </g>
    <ModeText x="193" y="765">插入模式</ModeText>
    <circle cx="190" cy="204" r="1" fill="#eaf2f8" />
  </Scene>
);

const tasks: { text: string; icon: React.ReactNode; on?: boolean }[] = [
  { text: "35348JIAOJIAN (...", on: true, icon: glyphs.treePart },
  { text: "proe5.0包络用法_...", icon: <g><circle cx="10" cy="10" r="10" fill="#fff" /><path d="M15 5Q6 3 6 7q0 2 4 3t4 3q0 4-9 2" fill="none" stroke="#1b6ea8" strokeWidth="3" /></g> },
  { text: "AutoCAD 2009 - [3...", icon: <g><path d="M1 1h18v18H1z" fill="#f0e4e2" /><path d="M2 17L8 3l3-1 6 14-6-3z" fill="#b5202a" /></g> },
  { text: "D:\\强\\CAD教材\\pr...", icon: <path d="M1 4h7l2 2h9v12H1z" fill="#f7dc6a" stroke="#a98718" /> },
  { text: "未命名 - 画图", icon: <g><path d="M5 9h10l-2 10H7z" fill="#e4e9ee" stroke="#667" /><path d="M7 9L3 1M10 9V1M13 9l4-7" stroke="#c8763a" strokeWidth="2.500" /></g> },
];

export default function App() {
  return (
    <>
      <GlobalStyle />
      <Frame>
        <TitleBar>
          <Icon name="treePart" size={13} />
          <Title>35348JIAOJIAN (活动的) - Creo Elements/Pro 5.0</Title>
          <WinButton type="button" aria-label="最小化"><Svg $s={11} viewBox="0 0 11 11"><path d="M1 8h6v3H1z" fill="#fff" /></Svg></WinButton>
          <WinButton type="button" aria-label="还原"><Svg $s={11} viewBox="0 0 11 11"><path d="M3.500 3V1.500h6v5H8M1.500 4.500h6v5h-6z" fill="none" stroke="#fff" strokeWidth="1.500" /></Svg></WinButton>
          <WinButton type="button" aria-label="关闭" $close><Svg $s={11} viewBox="0 0 11 11"><path d="M1 1l9 9m0-9l-9 9" stroke="#fff" strokeWidth="2" /></Svg></WinButton>
        </TitleBar>
        <MenuBar>
          {menus.map(([t, k]) => (
            <MenuItem type="button" key={k}>{t}<span>(<u>{k}</u>)</span></MenuItem>
          ))}
        </MenuBar>
        <Toolbars>
          <ToolRow>
            <Grip $first />
            <Tools names={["newFile", "open", "save", "print", "mail", "mailLink"]} />
            <Grip />
            <Tools names={["undo"]} /><DropArrow $wide type="button" aria-label="撤消列表" />
            <Tools names={["redo"]} /><DropArrow $off type="button" aria-label="重做列表" />
            <Tools names={["cut", "copy", "paste", "pasteSpecial", "regenA", "regenB", "find"]} />
            <SelectTool>
              <SelectMain type="button" aria-label="选取">
                <Svg viewBox="0 0 20 20"><path d="M1.500 3.500h17v13h-17z" fill="none" stroke="#98a3ab" strokeDasharray="4 2" /></Svg>
              </SelectMain>
              <DropArrow $off type="button" aria-label="选取方式" />
            </SelectTool>
            <Grip />
            <Tools names={["repaint", "spin", "orient", "sphere"]} active={["spin"]} />
            <DropArrow type="button" aria-label="外观" />
            <Tools names={["zoomIn", "zoomOut", "refit", "reorient", "savedViews", "viewMgr", "layers", "report"]} />
            <Grip />
            <Tools names={["wireframe", "hidden", "noHidden", "shaded", "enhanced"]} active={["shaded"]} />
          </ToolRow>
          <ToolRow>
            <Grip $first />
            <Tools names={["planeEye", "axisEye", "pointEye", "csysEye", "noteEye"]} active={["planeEye", "axisEye", "pointEye", "csysEye", "noteEye"]} />
            <Grip />
            <Tools names={["help"]} />
          </ToolRow>
        </Toolbars>
        <Messages>
          <Log>
            <LogLine><LogIcon viewBox="0 0 13 14"><circle cx="5" cy="7" r="2.500" fill="#0c1fae" /></LogIcon>特征成功重定义。</LogLine>
            <LogLine><LogIcon viewBox="0 0 13 14"><path d="M0 4.500h5V1l6 6-6 6V9.500H0z" fill="#2fd668" stroke="#114" /></LogIcon>选取将在上面包络草绘曲线的实体或面组。</LogLine>
            <LogLine><LogIcon viewBox="0 0 13 14"><path d="M.5 1.500h11v11H.5z" fill="#f5f03a" stroke="#222" /><path d="M1 2h7L4 7l4 5H1z" fill="#35c8d0" stroke="#222" /></LogIcon>加亮的选取无效。</LogLine>
            <LogLine>
              <LogIcon viewBox="0 0 13 14"><circle cx="5" cy="7" r="2.500" fill="#0c1fae" /></LogIcon>
              用缺省模板<LogPath>$PRO_DIRECTORY\templates\mmns_part_solid.prt</LogPath>作为模板。
            </LogLine>
          </Log>
          <Signal>
            <Svg viewBox="0 0 20 20"><path d="M7.500 1.500h4v4h-4z" fill="#d98a84" stroke="#a66" /><path d="M7.500 6.500h4v4h-4z" fill="#f4eeb0" stroke="#aa7" /><circle cx="9.500" cy="15" r="4.500" fill="#2fae3b" stroke="#0f5a1a" /><circle cx="8" cy="13.500" r="1.300" fill="#b6f0b0" /></Svg>
          </Signal>
          <Filter>
            <FilterSelect aria-label="过滤器" defaultValue="智能"><option>智能</option></FilterSelect>
          </Filter>
        </Messages>
        <Main>
          <Navigator>
            <NavColumn>
              <Tabs>
                <Tab type="button" aria-label="模型树" $on><Icon name="tabTree" size={19} /></Tab>
                <Tab type="button" aria-label="文件夹"><Icon name="tabFolders" size={19} /></Tab>
                <Tab type="button" aria-label="收藏夹"><Icon name="tabFav" size={19} /></Tab>
              </Tabs>
              <Panel>
                <PanelHead>
                  <PanelTitle>模型树</PanelTitle>
                  <HeadTool><Icon name="tools" /><DropArrow $wide type="button" aria-label="设置" /></HeadTool>
                  <HeadTool><Icon name="listView" /><DropArrow $wide type="button" aria-label="显示" /></HeadTool>
                </PanelHead>
                <Tree>
                  {tree.map((r, i) => (
                    <TreeRow key={r.text} $root={r.root} $dim={r.dim} $last={i === tree.length - 1}>
                      {r.plus && <Expander type="button" aria-label="展开" />}
                      <Icon name={r.icon} size={r.root ? 15 : 16} />
                      <FlaggedText $flag={r.flag}>{r.text}</FlaggedText>
                    </TreeRow>
                  ))}
                </Tree>
              </Panel>
            </NavColumn>
            <Sashes>
              <Sash type="button" aria-label="调整导航器" />
              <Sash type="button" aria-label="折叠导航器" $dark />
            </Sashes>
          </Navigator>
          <Viewport><Model /></Viewport>
          <SideTools>
            <SideTop />
            <SideCols>
              <SideGroup groups={sideLeft} width={41} />
              <SideGroup groups={sideRight} width={28} />
            </SideCols>
          </SideTools>
        </Main>
        <TaskBar>
          <Start type="button">
            <Svg $s={19} viewBox="0 0 20 20">
              <path d="M3 3q3-2 6 0L8 9Q5 7 2 9z" fill="#e8552a" /><path d="M10 3q3 2 7 0l-1 6q-4 2-7 0z" fill="#7cc242" />
              <path d="M2 10q3-2 6 0l-1 6Q4 14 1 16z" fill="#4a86e0" /><path d="M9 10q3 2 7 0l-1 6q-4 2-7 0z" fill="#f5c52e" />
            </Svg>
            开始
          </Start>
          <Quick>
            <QuickButton type="button" aria-label="浏览器" $framed>
              <Svg $s={17} viewBox="0 0 20 20"><path d="M2 4q3-5 7-2v4q-5 0 0 4 2 6-4 7l-3-2q6-2 2-5-5-2-2-6z" fill="#b4d83a" /><circle cx="14" cy="5" r="4" fill="#e8764a" /><circle cx="15" cy="12" r="4" fill="#7fb4f0" /><path d="M2 13l6 1v4H3z" fill="#f2c52a" /></Svg>
            </QuickButton>
            <QuickButton type="button" aria-label="显示桌面">
              <Svg $s={16} viewBox="0 0 20 20"><path d="M2 5l3-4h11v12l-3 6H2z" fill="#eaf3fb" stroke="#3a5a80" /><circle cx="8" cy="11" r="4" fill="none" stroke="#2a66a8" strokeWidth="1.500" /><path d="M7 12l11-9M5 11h6" stroke="#234" strokeWidth="1.500" /></Svg>
            </QuickButton>
          </Quick>
          <Tasks>
            {tasks.map((t) => (
              <Task type="button" key={t.text} $on={t.on}>
                <Svg $s={15} viewBox="0 0 20 20">{t.icon}</Svg>
                <span>{t.text}</span>
              </Task>
            ))}
          </Tasks>
          <Lang>
            CH
            <Svg $s={16} viewBox="0 0 20 20"><path d="M1.500 8.500h17v8h-17z" fill="#f3f3ee" stroke="#222" /><path d="M4 11h13M4 14h13" stroke="#222" strokeWidth="1.500" strokeDasharray="1.500 1.500" /><path d="M10 8Q9 4 14 3" fill="none" stroke="#222" /></Svg>
          </Lang>
          <Tray>
            <Svg $s={16} viewBox="0 0 20 20"><path d="M8 1h10v9H8z" fill="#4a5c9c" stroke="#c6cfe4" /><path d="M2 8h10v8H2z" fill="#6674ac" stroke="#d6dcea" /><path d="M4 18h8" stroke="#556" strokeWidth="2" /></Svg>
            <Svg $s={15} viewBox="0 0 20 20"><circle cx="9" cy="9" r="8" fill="#c6c6c2" stroke="#666" /><circle cx="11" cy="8" r="4" fill="#fff" stroke="#777" /></Svg>
            <Svg $s={15} viewBox="0 0 20 20"><path d="M10 1l8 3q0 11-8 15Q2 15 2 4z" fill="#5bb23a" stroke="#e6f3de" /><path d="M11 5l-5 6h4l-1 4 5-6h-4z" fill="#fff" /></Svg>
            <Svg $s={16} viewBox="0 0 20 20"><ellipse cx="10" cy="10" rx="7" ry="9" fill="#454b55" stroke="#e2e6ea" /><path d="M6 6l8 7-4 4V3l4 4-8 7" fill="none" stroke="#fff" strokeWidth="1.500" /></Svg>
            <Svg $s={16} viewBox="0 0 20 20"><circle cx="10" cy="10" r="9" fill="#8cc63a" /><path d="M3 10a7 7 0 0 1 14 0z" fill="#f3d52c" /><path d="M10 5v10M5 10h10" stroke="#147a2a" strokeWidth="3" /></Svg>
            <time>8:41</time>
          </Tray>
        </TaskBar>
        <Watermark>
          <MarkRings viewBox="0 0 60 62" aria-hidden="true">
            <g fill="none">
              <ellipse cx="22" cy="22" rx="22" ry="14" transform="rotate(42 22 22)" stroke="#2b5288" strokeWidth="3" opacity=".8" />
              <ellipse cx="43" cy="38" rx="12" ry="19" transform="rotate(24 43 38)" stroke="#a83d68" strokeWidth="3" opacity=".75" />
            </g>
          </MarkRings>
          <MarkText>
            <MarkName>野火论坛</MarkName>
            <MarkUrl>www.proewildfire.cn</MarkUrl>
          </MarkText>
        </Watermark>
      </Frame>
    </>
  );
}
